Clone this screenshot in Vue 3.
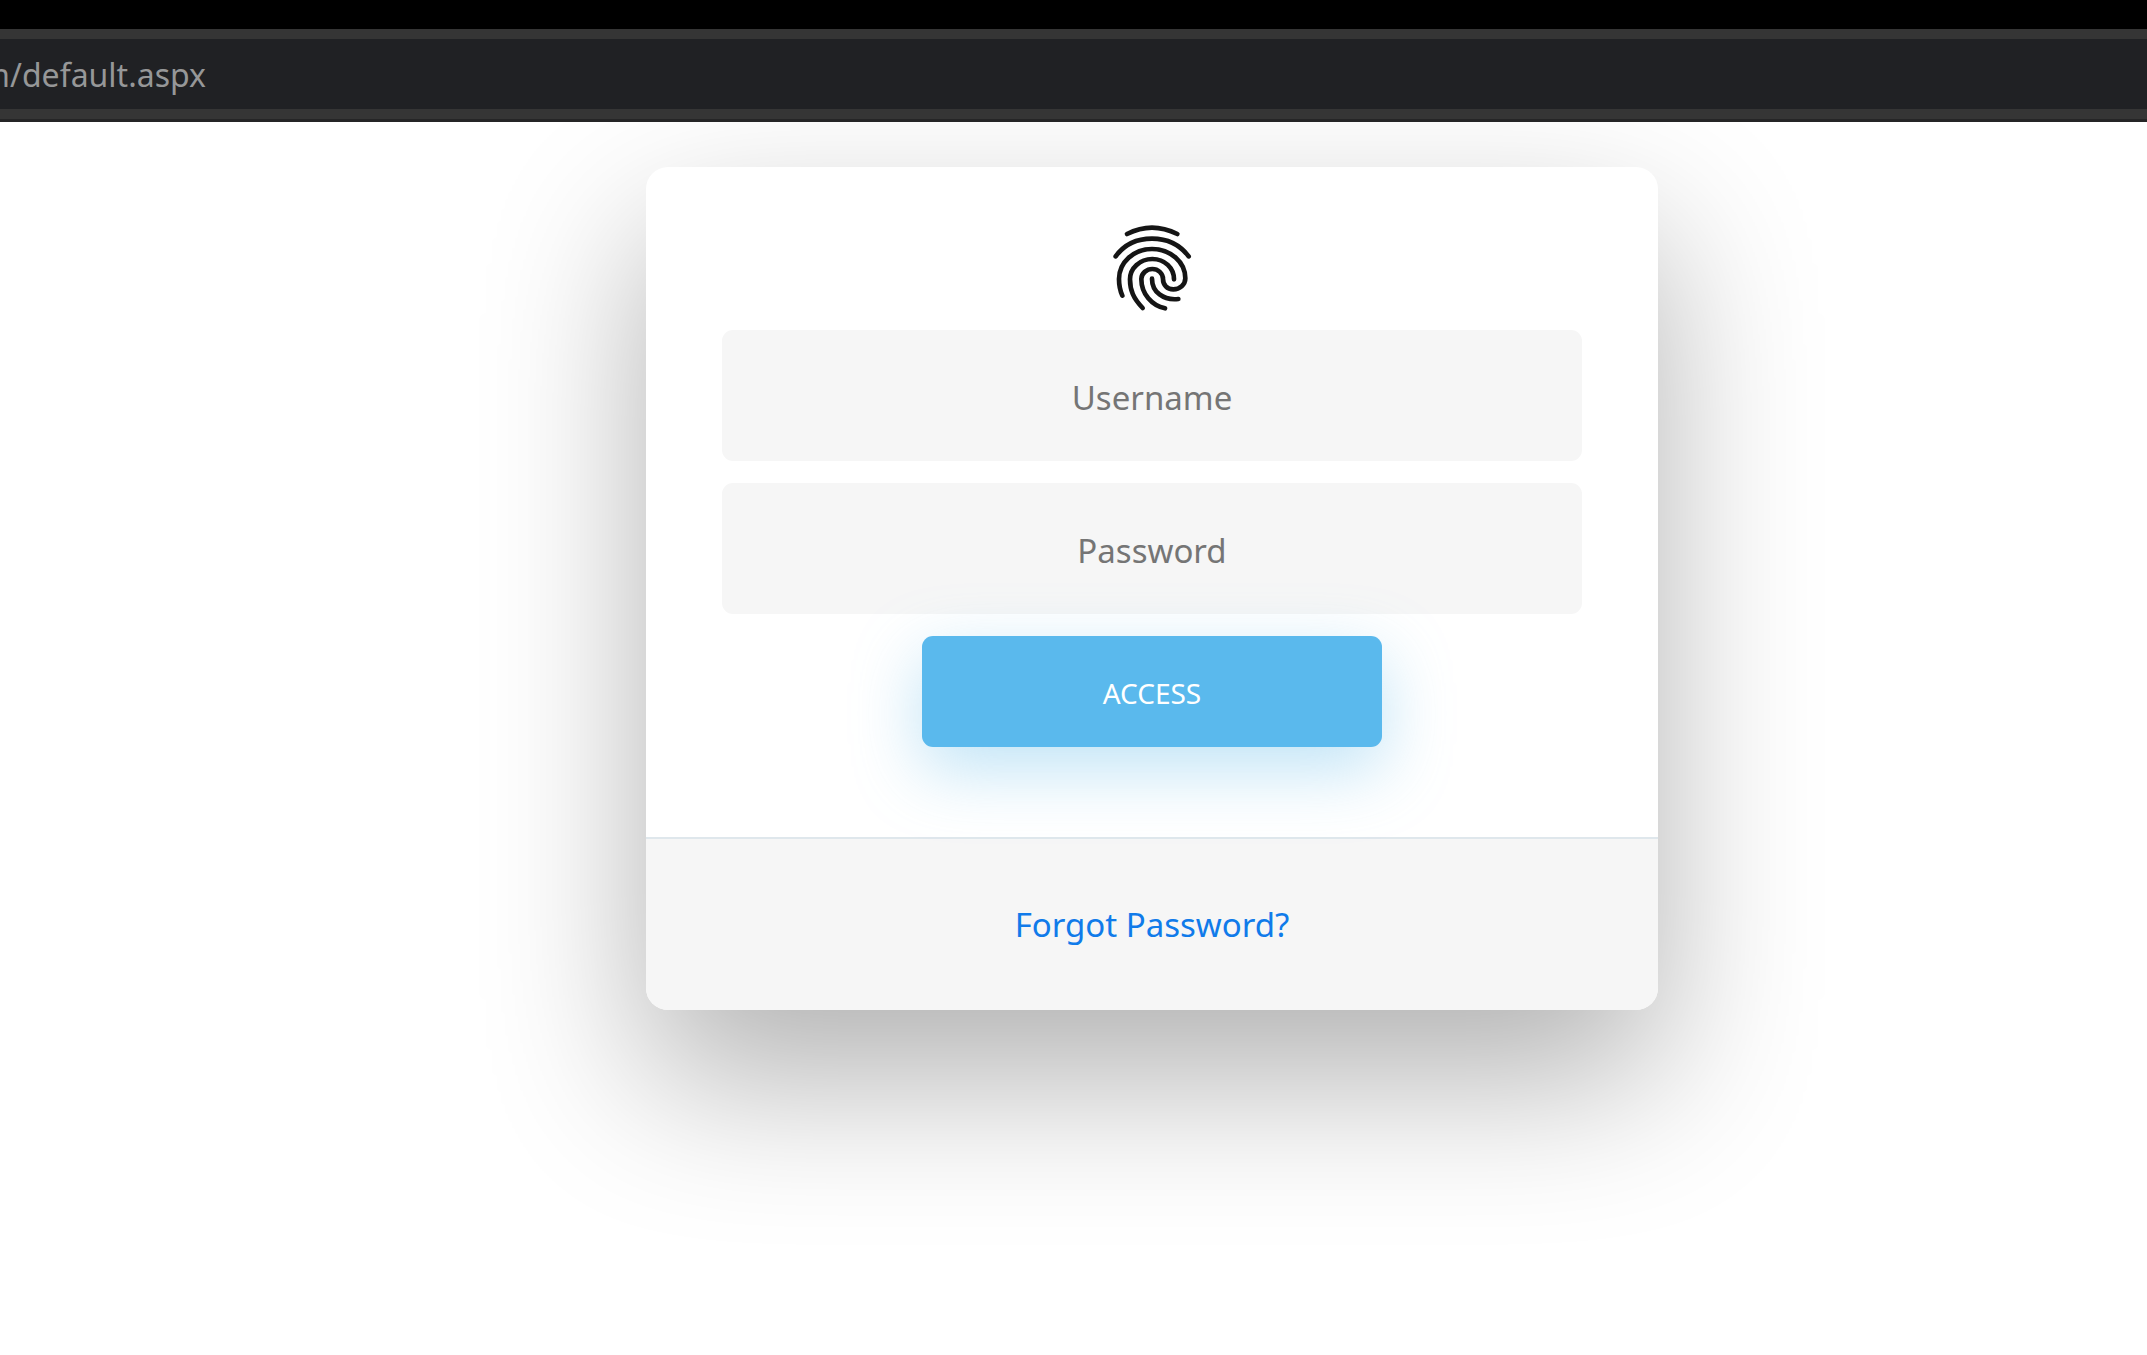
<script setup>
import { ref } from 'vue'

const username = ref('')
const password = ref('')
</script>

<template>
  <div class="page">
    <header class="browser">
      <div class="address"><span>m/default.aspx</span></div>
    </header>
    <main class="content">
      <section class="card">
        <form class="login" @submit.prevent>
          <svg class="fingerprint" viewBox="62 36 246 276" aria-hidden="true">
            <path d="M110 72Q148 53 185 53T261 72" />
            <path d="M76 139C101 105 140 86 185 86S269 105 295 139" />
            <path d="M96 257C88 239 86 225 86 207C86 157 130 117 185 117S285 156 285 205C285 224 268 238 249 238C230 238 218 224 218 207C218 190 203 177 186 177S153 190 153 207C153 252 185 287 224 295" />
            <path d="M157 294C129 265 119 241 119 208C119 174 149 147 186 147S251 174 251 208" />
            <path d="M185 206C185 246 219 272 264 267" />
          </svg>
          <input v-model="username" type="text" placeholder="Username" aria-label="Username" />
          <input v-model="password" type="password" placeholder="Password" aria-label="Password" />
          <button type="submit">ACCESS</button>
        </form>
        <footer class="card-footer">
          <a href="#">Forgot Password?</a>
        </footer>
      </section>
    </main>
  </div>
</template>

<style>
body {
  margin: 0;
  background: #fff;
}
</style>

<style scoped>
.page {
  min-height: 100vh;
  overflow: hidden;
  background: #fff;
  font-family: "Noto Sans", "Open Sans", sans-serif;
  font-size: 33px;
  line-height: 48px;
}

.browser {
  position: relative;
  z-index: 1;
  padding: 10px 0;
  border-top: 29px solid #000;
  border-bottom: 3px solid #252526;
  background: #353535;
}

.address {
  display: flex;
  justify-content: flex-end;
  align-items: center;
  box-sizing: border-box;
  height: 70px;
  padding-top: 2px;
  padding-right: calc(100% - 206px);
  overflow: hidden;
  background: #202124;
  color: #969798;
  font-size: 32px;
  white-space: nowrap;
}

.content {
  display: flex;
  justify-content: center;
  padding: 45px 0 45px 157px;
}

.card {
  width: 100%;
  max-width: 1012px;
  border-radius: 22px;
  background: #fff;
  box-shadow: 0 68px 160px rgba(0, 0, 0, 0.31);
  text-align: center;
}

.login {
  display: flex;
  flex-direction: column;
  align-items: center;
  gap: 22px;
  padding: 55px 76px 90px;
}

.fingerprint {
  width: 82px;
  height: 92px;
  margin-bottom: -6px;
  fill: none;
  stroke: #151515;
  stroke-width: 14;
  stroke-linecap: round;
  stroke-linejoin: round;
}

input {
  box-sizing: border-box;
  width: 100%;
  height: 131px;
  padding: 4px 72px 0;
  border: 0;
  border-radius: 11px;
  background: #f6f6f6;
  color: #0d0d0d;
  font: inherit;
  text-align: center;
}

input::placeholder {
  color: #757575;
  opacity: 1;
}

button {
  width: 460px;
  height: 111px;
  padding: 2px 0 0;
  border: 0;
  border-radius: 11px;
  background: #5ab9ed;
  box-shadow: 0 22px 68px rgba(95, 186, 233, 0.4);
  color: #fff;
  font: inherit;
  font-size: 28px;
}

.card-footer {
  padding: 62px 56px 61px;
  border-top: 2px solid #dfe7ec;
  border-radius: 0 0 22px 22px;
  background: #f6f6f6;
}

.card-footer a {
  color: #107bea;
  text-decoration: none;
}
</style>
